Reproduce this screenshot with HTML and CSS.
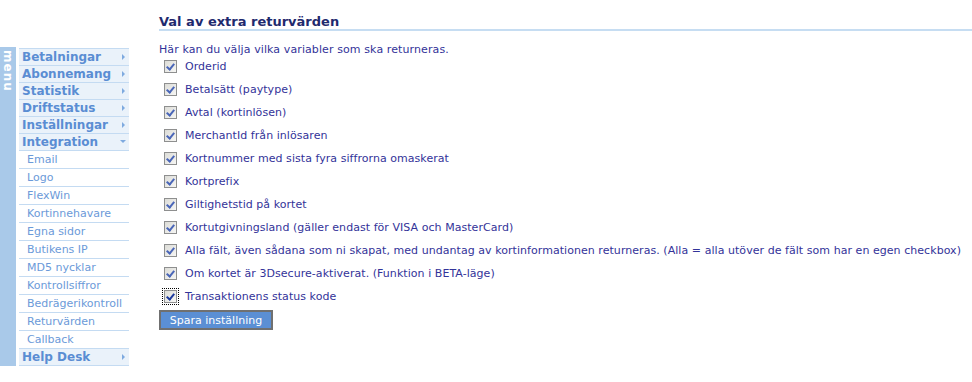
FILE: index.html
```html
<!DOCTYPE html>
<html lang="sv">
<head>
    <meta charset="UTF-8">
    <title>Val av extra returvärden</title>
    <link rel="stylesheet" href="styles.css">
</head>
<body>
    <div class="page">
        <div class="sidebar">
            <div class="strip"><span>menu</span></div>
            <ul class="menu">
                <li class="top">Betalningar<i class="arr"></i></li>
                <li class="top">Abonnemang<i class="arr"></i></li>
                <li class="top">Statistik<i class="arr"></i></li>
                <li class="top">Driftstatus<i class="arr"></i></li>
                <li class="top">Inställningar<i class="arr"></i></li>
                <li class="top">Integration<i class="arr down"></i></li>
                <li class="sub">Email</li>
                <li class="sub">Logo</li>
                <li class="sub">FlexWin</li>
                <li class="sub">Kortinnehavare</li>
                <li class="sub">Egna sidor</li>
                <li class="sub">Butikens IP</li>
                <li class="sub">MD5 nycklar</li>
                <li class="sub">Kontrollsiffror</li>
                <li class="sub">Bedrägerikontroll</li>
                <li class="sub">Returvärden</li>
                <li class="sub">Callback</li>
                <li class="top">Help Desk<i class="arr"></i></li>
            </ul>
        </div>

        <div class="content">
            <h2>Val av extra returvärden</h2>
            <p class="intro">Här kan du välja vilka variabler som ska returneras.</p>
            <ul class="options">
                <li><span class="cb"></span>Orderid</li>
                <li><span class="cb"></span>Betalsätt (paytype)</li>
                <li><span class="cb"></span>Avtal (kortinlösen)</li>
                <li><span class="cb"></span>MerchantId från inlösaren</li>
                <li><span class="cb"></span>Kortnummer med sista fyra siffrorna omaskerat</li>
                <li><span class="cb"></span>Kortprefix</li>
                <li><span class="cb"></span>Giltighetstid på kortet</li>
                <li><span class="cb"></span>Kortutgivningsland (gäller endast för VISA och MasterCard)</li>
                <li><span class="cb"></span>Alla fält, även sådana som ni skapat, med undantag av kortinformationen returneras. (Alla = alla utöver de fält som har en egen checkbox)</li>
                <li><span class="cb"></span>Om kortet är 3Dsecure-aktiverat. (Funktion i BETA-läge)</li>
                <li><span class="cb focus"></span>Transaktionens status kode</li>
            </ul>
            <button class="save">Spara inställning</button>
        </div>
    </div>
</body>
</html>
```

FILE: styles.css
```css
body {
    margin: 0;
    padding: 0;
    background: #fff;
    font-family: "DejaVu Sans", Verdana, sans-serif;
    font-size: 11px;
}

.page {
    display: flex;
    align-items: flex-start;
}

/* left menu */
.sidebar {
    display: flex;
    gap: 3px;
    margin-top: 47px;
    width: 129px;
}

.strip {
    width: 16px;
    align-self: stretch;
    background: #a9c9e9;
}

.strip span {
    display: block;
    writing-mode: vertical-rl;
    color: #fff;
    font-weight: bold;
    font-size: 12px;
    letter-spacing: 1px;
    line-height: 16px;
    padding-top: 3px;
}

.menu {
    list-style: none;
    margin: 1px 0 0;
    padding: 0;
    width: 110px;
    border-top: 1px solid #c4dbf2;
}

.menu li {
    position: relative;
    border-bottom: 1px solid #c4dbf2;
    white-space: nowrap;
}

.menu .top {
    height: 16px;
    line-height: 17px;
    padding-left: 3px;
    background: #eaf2fa;
    color: #5a8dd3;
    font-weight: bold;
    font-size: 12px;
}

.menu .sub {
    height: 17px;
    line-height: 18px;
    padding-left: 8px;
    color: #6b9ad9;
}

.arr {
    position: absolute;
    right: 4px;
    top: 5px;
    width: 0;
    height: 0;
    border-top: 3px solid transparent;
    border-bottom: 3px solid transparent;
    border-left: 3px solid #7eaadf;
}

.arr.down {
    top: 6px;
    right: 3px;
    border-left: 3px solid transparent;
    border-right: 3px solid transparent;
    border-top: 3px solid #7eaadf;
    border-bottom: 0;
}

/* main area */
.content {
    flex: 1;
    margin-left: 30px;
    color: #333399;
}

h2 {
    margin: 14px 0 0;
    padding-bottom: 0;
    border-bottom: 2px solid #c6ddf2;
    color: #1f2a6e;
    font-size: 13px;
    line-height: 15px;
}

.intro {
    margin: 12px 0 0;
    line-height: 14px;
    letter-spacing: 0.1px;
}

.options {
    list-style: none;
    margin: -2px 0 0;
    padding: 0 0 0 5px;
    letter-spacing: 0.05px;
}

.options li {
    display: flex;
    align-items: center;
    gap: 8px;
    height: 23px;
}

.cb {
    position: relative;
    width: 11px;
    height: 11px;
    border: 1px solid #8e8f8f;
    background: linear-gradient(135deg, #dcdcd7, #f6f6f4);
}

.cb::after {
    content: "";
    position: absolute;
    left: 3px;
    top: 1px;
    width: 3px;
    height: 6px;
    border-right: 2px solid #4a66b8;
    border-bottom: 2px solid #4a66b8;
    transform: rotate(40deg);
}

.cb.focus {
    outline: 1px dotted #000;
    outline-offset: 1px;
}

.cb.focus::after {
    border-color: #1d3a9e;
}

.save {
    margin-top: 2px;
    height: 20px;
    width: 114px;
    padding: 0;
    border: 2px solid #707070;
    background: #5b8fd4;
    color: #fff;
    font-family: "DejaVu Sans", Verdana, sans-serif;
    font-size: 11px;
}
```
